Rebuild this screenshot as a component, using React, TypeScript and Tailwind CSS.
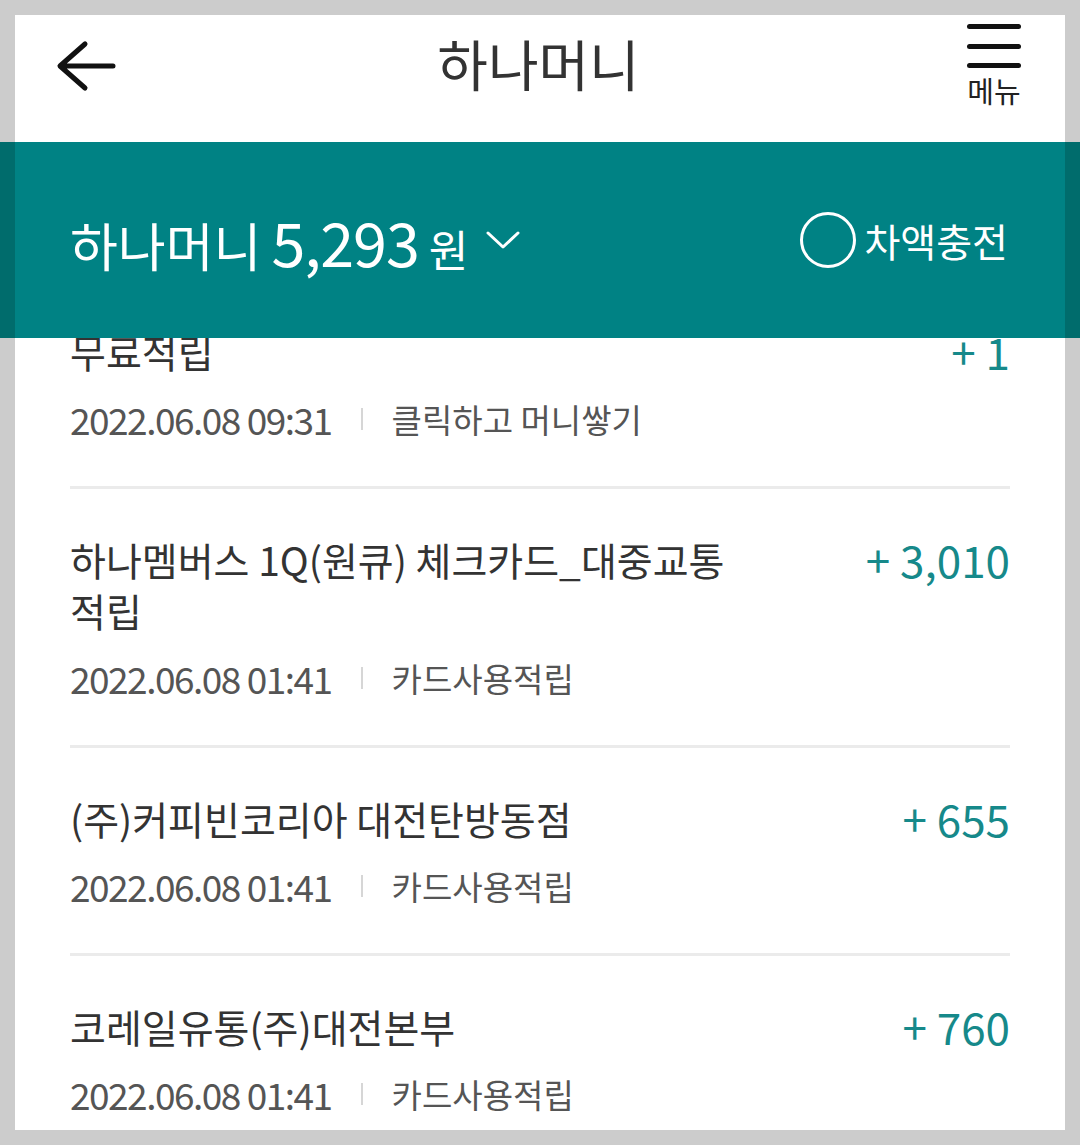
import React from 'react';

const font = { fontFamily: '"Noto Sans CJK KR", "Noto Sans", sans-serif' };

const items = [
  { title: ['무료적립'], amount: '+ 1', date: '2022.06.08 09:31', kind: '클릭하고 머니쌓기' },
  { title: ['하나멤버스 1Q(원큐) 체크카드_대중교통', '적립'], amount: '+ 3,010', date: '2022.06.08 01:41', kind: '카드사용적립' },
  { title: ['(주)커피빈코리아 대전탄방동점'], amount: '+ 655', date: '2022.06.08 01:41', kind: '카드사용적립' },
  { title: ['코레일유통(주)대전본부'], amount: '+ 760', date: '2022.06.08 01:41', kind: '카드사용적립' },
];

export default function App() {
  return (
    <div className="h-[1145px] w-[1080px] overflow-hidden bg-[#cccccc] px-[15px] pt-[15px]" style={font}>
      <div className="flex h-[1115px] flex-col bg-white">
        {/* top app bar */}
        <header className="grid h-[127px] shrink-0 grid-cols-[1fr_auto_1fr] items-start pl-[40px] pr-[43px]">
          <svg width="62" height="54" viewBox="0 0 62 54" className="mt-[24px]">
            <path d="M58 27H6M30 5L5 27l25 22" fill="none" stroke="#111" strokeWidth="5" strokeLinecap="round" strokeLinejoin="round" />
          </svg>
          <h1 className="mt-[12px] text-[55px] leading-[70px] text-[#333]">하나머니</h1>
          <div className="flex w-[56px] flex-col items-center justify-self-end pt-[9px]">
            <span className="h-[5px] w-[54px] rounded-full bg-[#111]" />
            <span className="mt-[15px] h-[5px] w-[54px] rounded-full bg-[#111]" />
            <span className="mt-[14px] h-[5px] w-[54px] rounded-full bg-[#111]" />
            <span className="mt-[3px] text-[29px] leading-[38px] text-[#222]">메뉴</span>
          </div>
        </header>

        {/* balance bar */}
        <div className="relative z-10 -mx-[15px] flex h-[196px] shrink-0 items-center justify-between border-x-[15px] border-[#006c6c] bg-[#008284] pl-[55px] pr-[57px] text-white">
          <div className="flex items-baseline">
            <span className="text-[52px] leading-none">하나머니</span>
            <span className="ml-[10px] text-[61px] leading-none tracking-[-1px]">5,293</span>
            <span className="ml-[10px] text-[43px] leading-none">원</span>
            <svg width="34" height="20" viewBox="0 0 34 20" className="ml-[18px] self-center">
              <path d="M2 3l15 14L32 3" fill="none" stroke="#fff" strokeWidth="3" strokeLinecap="round" strokeLinejoin="round" />
            </svg>
          </div>
          <div className="flex items-center">
            <span className="h-[56px] w-[56px] rounded-full border-[3px] border-white" />
            <span className="ml-[8px] text-[39px] leading-none">차액충전</span>
          </div>
        </div>

        {/* history list */}
        <ul className="-mt-[57px] px-[55px]">
          {items.map((it, i) => (
            <li key={i} className={i > 0 ? 'border-t-[3px] border-[#ebebeb]' : ''}>
              <div className="pt-[45px] pb-[42px]">
                <div className="flex items-start justify-between">
                  <div className="text-[39px] leading-[51px] text-[#333]">
                    {it.title.map((t, j) => (
                      <div key={j}>{t}</div>
                    ))}
                  </div>
                  <span className="shrink-0 text-[44px] leading-[51px] text-[#16898a]">{it.amount}</span>
                </div>
                <div className="mt-[17px] flex items-center text-[#555]">
                  <span className="text-[37px] leading-[50px] tracking-[-1.5px]">{it.date}</span>
                  <span className="mx-[29px] h-[22px] w-[2px] bg-[#d6d6d6]" />
                  <span className="text-[33px] leading-[50px]">{it.kind}</span>
                </div>
              </div>
            </li>
          ))}
        </ul>
      </div>
    </div>
  );
}
